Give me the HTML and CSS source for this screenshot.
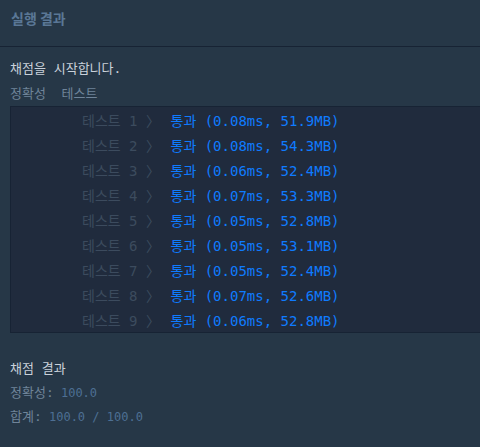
FILE: index.html
```
<!DOCTYPE html>
<html>
	<head>
		<meta charset="utf-8">
		<title>실행 결과</title>
		<link rel="stylesheet" href="styles.css">
	</head>
	<body>
		<div class="panel_head">실행 결과</div>
		<div class="panel_body">
			<p class="console_msg">채점을 시작합니다.</p>
			<p class="console_label">정확성  테스트</p>
			<table class="test_table">
				<tr><td class="test_name">테스트 1 〉</td><td class="test_result">통과 (0.08ms, 51.9MB)</td></tr>
				<tr><td class="test_name">테스트 2 〉</td><td class="test_result">통과 (0.08ms, 54.3MB)</td></tr>
				<tr><td class="test_name">테스트 3 〉</td><td class="test_result">통과 (0.06ms, 52.4MB)</td></tr>
				<tr><td class="test_name">테스트 4 〉</td><td class="test_result">통과 (0.07ms, 53.3MB)</td></tr>
				<tr><td class="test_name">테스트 5 〉</td><td class="test_result">통과 (0.05ms, 52.8MB)</td></tr>
				<tr><td class="test_name">테스트 6 〉</td><td class="test_result">통과 (0.05ms, 53.1MB)</td></tr>
				<tr><td class="test_name">테스트 7 〉</td><td class="test_result">통과 (0.05ms, 52.4MB)</td></tr>
				<tr><td class="test_name">테스트 8 〉</td><td class="test_result">통과 (0.07ms, 52.6MB)</td></tr>
				<tr><td class="test_name">테스트 9 〉</td><td class="test_result">통과 (0.06ms, 52.8MB)</td></tr>
			</table>
			<p class="console_msg score_title">채점 결과</p>
			<p class="score_line"><span class="console_label">정확성:</span> 100.0</p>
			<p class="score_line"><span class="console_label">합계:</span> 100.0 / 100.0</p>
		</div>
	</body>
</html>
```
FILE: styles.css
```
html, body {
	margin: 0;
	padding: 0;
	background-color: #263747;
	height: 100%;
	overflow: hidden;
}
.panel_head {
	height: 47px;
	line-height: 36px;
	padding-left: 11px;
	border-bottom: 1px solid #172334;
	box-sizing: border-box;
	font-family: "Noto Sans CJK KR", "Noto Sans", sans-serif;
	font-weight: bold;
	font-size: 14px;
	color: #5a7796;
}
.panel_body {
	padding: 11px 0 0 10px;
	font-family: "DejaVu Sans Mono", "Noto Sans CJK KR", monospace;
	font-size: 12px;
}
.panel_body p {
	margin: 0;
	white-space: pre;
}
.console_msg {
	color: #c9d1da;
	font-size: 13px;
	line-height: 22px;
}
.console_label {
	color: #6f8499;
	font-size: 13px;
	line-height: 24px;
}
p.console_label {
	padding-top: 2px;
}
.test_table {
	width: 100%;
	border-collapse: collapse;
	background-color: #202b3d;
	border: 1px solid #172334;
	border-right: none;
	font-size: 14px;
	margin-top: 0;
	margin-bottom: 24px;
}
.test_table td {
	height: 25px;
	padding: 0;
	white-space: pre;
}
.test_name {
	width: 160px;
	padding-left: 71px !important;
	box-sizing: border-box;
	color: #3c4b5e;
}
.test_result {
	color: #0f7bff;
}
.score_title {
	line-height: 24px;
}
.score_line {
	color: #4d6f93;
	line-height: 22px;
}
```
